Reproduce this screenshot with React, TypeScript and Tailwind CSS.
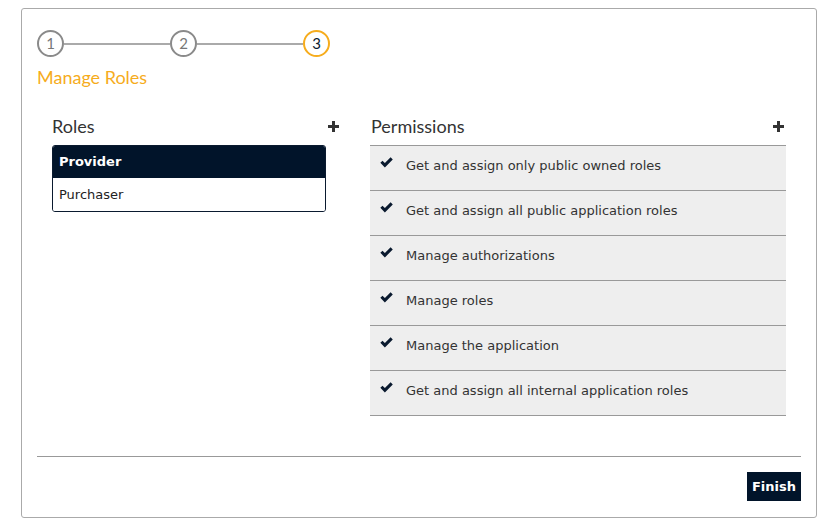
import React from 'react';

const permissions = [
    'Get and assign only public owned roles',
    'Get and assign all public application roles',
    'Manage authorizations',
    'Manage roles',
    'Manage the application',
    'Get and assign all internal application roles',
];

const body = { fontFamily: '"DejaVu Sans", Verdana, sans-serif' };
const head = { fontFamily: 'Lato, "Noto Sans", sans-serif' };

function Plus() {
    return (
        <svg width="11" height="11" viewBox="0 0 11 11" className="text-[#333]">
            <rect x="4" y="0" width="3" height="11" fill="currentColor" />
            <rect x="0" y="4" width="11" height="3" fill="currentColor" />
        </svg>
    );
}

function Check() {
    return (
        <svg width="13" height="11" viewBox="0 0 12 10" className="text-[#0a1a2f]">
            <path d="M0.3 5.3 L2.3 3.3 L4.5 5.5 L9.8 0.2 L11.8 2.2 L4.5 9.5 Z" fill="currentColor" />
        </svg>
    );
}

function Step({ n, active }: { n: number; active?: boolean }) {
    return (
        <div
            className={`w-[27px] h-[27px] rounded-full border-2 flex items-center justify-center text-[15px] bg-white shrink-0 ${
                active ? 'border-[#f6ac1c] text-[#0a1a2f]' : 'border-[#8a8a8a] text-[#777]'
            }`}
            style={head}
        >
            {n}
        </div>
    );
}

export default function App() {
    return (
        <main className="bg-white w-[826px] h-[532px] pt-[8px] pl-[21px]">
            <div className="w-[796px] h-[510px] border border-[#aaa] rounded-[3px] px-[15px] pt-[21px]">
                <div className="flex items-center w-[293px]">
                    <Step n={1} />
                    <div className="flex-1 h-[2px] bg-[#aaa]" />
                    <Step n={2} />
                    <div className="flex-1 h-[2px] bg-[#aaa]" />
                    <Step n={3} active />
                </div>
                <h2 className="text-[18px] text-[#f6ac1c] mt-[8px] leading-[24px]" style={head}>
                    Manage Roles
                </h2>

                <div className="flex mt-[23px] h-[307px]">
                    <div className="w-[318px] pl-[15px]">
                        <div className="flex items-center justify-between w-[287px] h-[28px]">
                            <span className="text-[18px] text-[#333]" style={head}>Roles</span>
                            <Plus />
                        </div>
                        <div className="mt-[5px] w-[274px] border border-[#0a1a2f] rounded-[3px] overflow-hidden text-[13px]" style={body}>
                            <div className="h-[32px] bg-[#01142a] text-white font-bold flex items-center px-[6px]">Provider</div>
                            <div className="h-[33px] bg-white text-[#222] flex items-center px-[6px]">Purchaser</div>
                        </div>
                    </div>
                    <div className="w-[446px] px-[15px]">
                        <div className="flex items-center justify-between h-[28px] pl-[1px] pr-[2px]">
                            <span className="text-[18px] text-[#333]" style={head}>Permissions</span>
                            <Plus />
                        </div>
                        <ul className="mt-[5px] border-t border-[#999]" style={body}>
                            {permissions.map((p) => (
                                <li
                                    key={p}
                                    className="h-[45px] bg-[#eee] border-b border-[#999] flex items-start pt-[10px] pl-[10px] text-[13px] text-[#333]"
                                >
                                    <span className="w-[26px] pt-[1px]"><Check /></span>
                                    <span>{p}</span>
                                </li>
                            ))}
                        </ul>
                    </div>
                </div>

                <hr className="border-0 h-[1px] bg-[#999] mt-[37px]" />
                <div className="flex justify-end mt-[15px]">
                    <button className="bg-[#01142a] text-white text-[13px] font-bold h-[29px] px-[5px]" style={body}>
                        Finish
                    </button>
                </div>
            </div>
        </main>
    );
}
